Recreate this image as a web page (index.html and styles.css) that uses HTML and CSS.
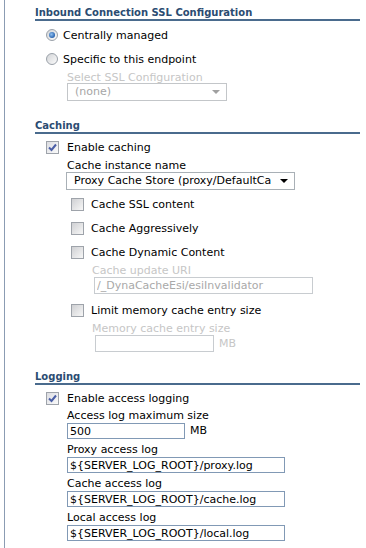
FILE: index.html
```html
<!DOCTYPE html>
<html lang="en">
<head>
  <meta charset="UTF-8">
  <title>Proxy settings</title>
  <link rel="stylesheet" href="styles.css">
</head>
<body>
  <div class="panel">

    <div class="title first">Inbound Connection SSL Configuration</div>

    <div class="opt opt-first">
      <span class="radio on"></span>
      <span>Centrally managed</span>
    </div>
    <div class="opt opt-second">
      <span class="radio"></span>
      <span>Specific to this endpoint</span>
    </div>
    <div class="sub">
      <div class="label off ssl-label">Select SSL Configuration</div>
      <div class="select off ssl-select">
        <span>(none)</span>
        <span class="arrow"></span>
      </div>
    </div>

    <div class="title caching">Caching</div>

    <div class="chk-row top-row">
      <span class="check on"><svg width="11" height="11" viewBox="0 0 11 11"><path d="M2 5.5 L4.5 8 L9 2.5" fill="none" stroke="#4a5ea6" stroke-width="2"/></svg></span>
      <span>Enable caching</span>
    </div>
    <div class="sub">
      <div class="label name-label">Cache instance name</div>
      <div class="select cache-select">
        <span>Proxy Cache Store (proxy/DefaultCa</span>
        <span class="arrow"></span>
      </div>

      <div class="chk-row nested first-nested">
        <span class="check"></span>
        <span>Cache SSL content</span>
      </div>
      <div class="chk-row nested">
        <span class="check"></span>
        <span>Cache Aggressively</span>
      </div>
      <div class="chk-row nested">
        <span class="check"></span>
        <span>Cache Dynamic Content</span>
      </div>
      <div class="deep">
        <div class="label off">Cache update URI</div>
        <input class="text off uri" type="text" value="/_DynaCacheEsi/esiInvalidator" disabled>
      </div>
      <div class="chk-row nested limit-row">
        <span class="check"></span>
        <span>Limit memory cache entry size</span>
      </div>
      <div class="deep">
        <div class="label off">Memory cache entry size</div>
        <div class="with-unit">
          <input class="text off mem" type="text" value="" disabled>
          <span class="unit off">MB</span>
        </div>
      </div>
    </div>

    <div class="title logging">Logging</div>

    <div class="chk-row top-row">
      <span class="check on"><svg width="11" height="11" viewBox="0 0 11 11"><path d="M2 5.5 L4.5 8 L9 2.5" fill="none" stroke="#4a5ea6" stroke-width="2"/></svg></span>
      <span>Enable access logging</span>
    </div>
    <div class="sub logs">
      <div class="label">Access log maximum size</div>
      <div class="with-unit">
        <input class="text size" type="text" value="500">
        <span class="unit">MB</span>
      </div>

      <div class="label">Proxy access log</div>
      <input class="text path" type="text" value="${SERVER_LOG_ROOT}/proxy.log">

      <div class="label">Cache access log</div>
      <input class="text path" type="text" value="${SERVER_LOG_ROOT}/cache.log">

      <div class="label">Local access log</div>
      <input class="text path" type="text" value="${SERVER_LOG_ROOT}/local.log">
    </div>

  </div>
</body>
</html>
```

FILE: styles.css
```css
* {
  box-sizing: border-box;
}

body {
  margin: 0;
  background: #fff;
  color: #000;
  font-family: "DejaVu Sans", Verdana, sans-serif;
  font-size: 11px;
}

.panel {
  margin-left: 4px;
  border-left: 1px solid #8b9cb3;
  padding: 0 6px 0 30px;
  min-height: 548px;
  overflow: hidden;
}

/* section headers */
.title {
  font-size: 10px;
  font-weight: bold;
  color: #2b4c72;
  line-height: 13px;
  border-bottom: 2px solid #4a6b8d;
}

.title.first { margin-top: 6px; }
.title.caching { margin-top: 18px; }
.title.logging { margin-top: 18px; }

/* radio rows */
.opt {
  display: flex;
  align-items: center;
  gap: 5px;
  height: 14px;
  padding-left: 11px;
}

.opt-first { margin-top: 7px; }
.opt-second { margin-top: 10px; }

.radio {
  width: 12px;
  height: 12px;
  border-radius: 50%;
  border: 1px solid #9aa1a9;
  background: linear-gradient(135deg, #d3d5d8, #fbfbfb);
  display: flex;
  align-items: center;
  justify-content: center;
}

.radio.on::after {
  content: "";
  width: 6px;
  height: 6px;
  border-radius: 50%;
  background: radial-gradient(circle at 40% 40%, #8fc0f0, #2a64b0 70%, #1b4688);
}

/* checkbox rows */
.chk-row {
  display: flex;
  align-items: center;
  gap: 8px;
  height: 14px;
  padding-left: 11px;
}

.chk-row.top-row { margin-top: 6px; }
.chk-row.nested { margin-top: 10px; padding-left: 4px; gap: 7px; }
.chk-row.first-nested { margin-top: 7px; }
.chk-row.limit-row { margin-top: 9px; }

.check {
  width: 13px;
  height: 13px;
  border: 1px solid #9ea3aa;
  background: linear-gradient(135deg, #cfd0d3, #f7f7f7);
  display: flex;
  align-items: center;
  justify-content: center;
}

.check.on {
  background: linear-gradient(135deg, #dcdde2, #fafafa);
}

/* nested fields */
.sub {
  padding-left: 32px;
}

.label {
  line-height: 12px;
  margin-top: 5px;
}

.label.off,
.unit.off {
  color: #c6c6c6;
}

.ssl-label { margin-top: 6px; line-height: 11px; }
.name-label { margin-top: 6px; }

.select {
  position: relative;
  height: 18px;
  border: 1px solid #a9b0b6;
  padding-left: 7px;
  line-height: 16px;
  white-space: nowrap;
  overflow: hidden;
}

.select.off {
  border-color: #c3c6c9;
  color: #a6a6a6;
}

.ssl-select { width: 160px; }
.cache-select { width: 229px; margin-left: -1px; }

.arrow {
  position: absolute;
  right: 6px;
  top: 6px;
  border-left: 4px solid transparent;
  border-right: 4px solid transparent;
  border-top: 4px solid #000;
}

.select.off .arrow {
  border-top-color: #a0a0a0;
}

.deep {
  padding-left: 25px;
}

.deep .label { margin-top: 6px; }

.text {
  display: block;
  height: 16px;
  margin: 0;
  padding: 0 2px;
  border: 1px solid #8199b5;
  font-family: inherit;
  font-size: 11px;
  color: #000;
  background: #fff;
  outline: none;
}

.text.off {
  border-color: #c8ccd0;
  color: #a9a9a9;
  height: 17px;
}

.uri { width: 219px; margin-left: 2px; }
.mem { width: 119px; margin-left: 3px; }

.with-unit {
  display: flex;
  align-items: center;
  gap: 5px;
}

.unit { line-height: 12px; }

.logs .label { margin-top: 5px; }
.logs .text { margin-top: 1px; }
.size { width: 118px; margin-left: 0; }
.path { width: 218px; }
```
